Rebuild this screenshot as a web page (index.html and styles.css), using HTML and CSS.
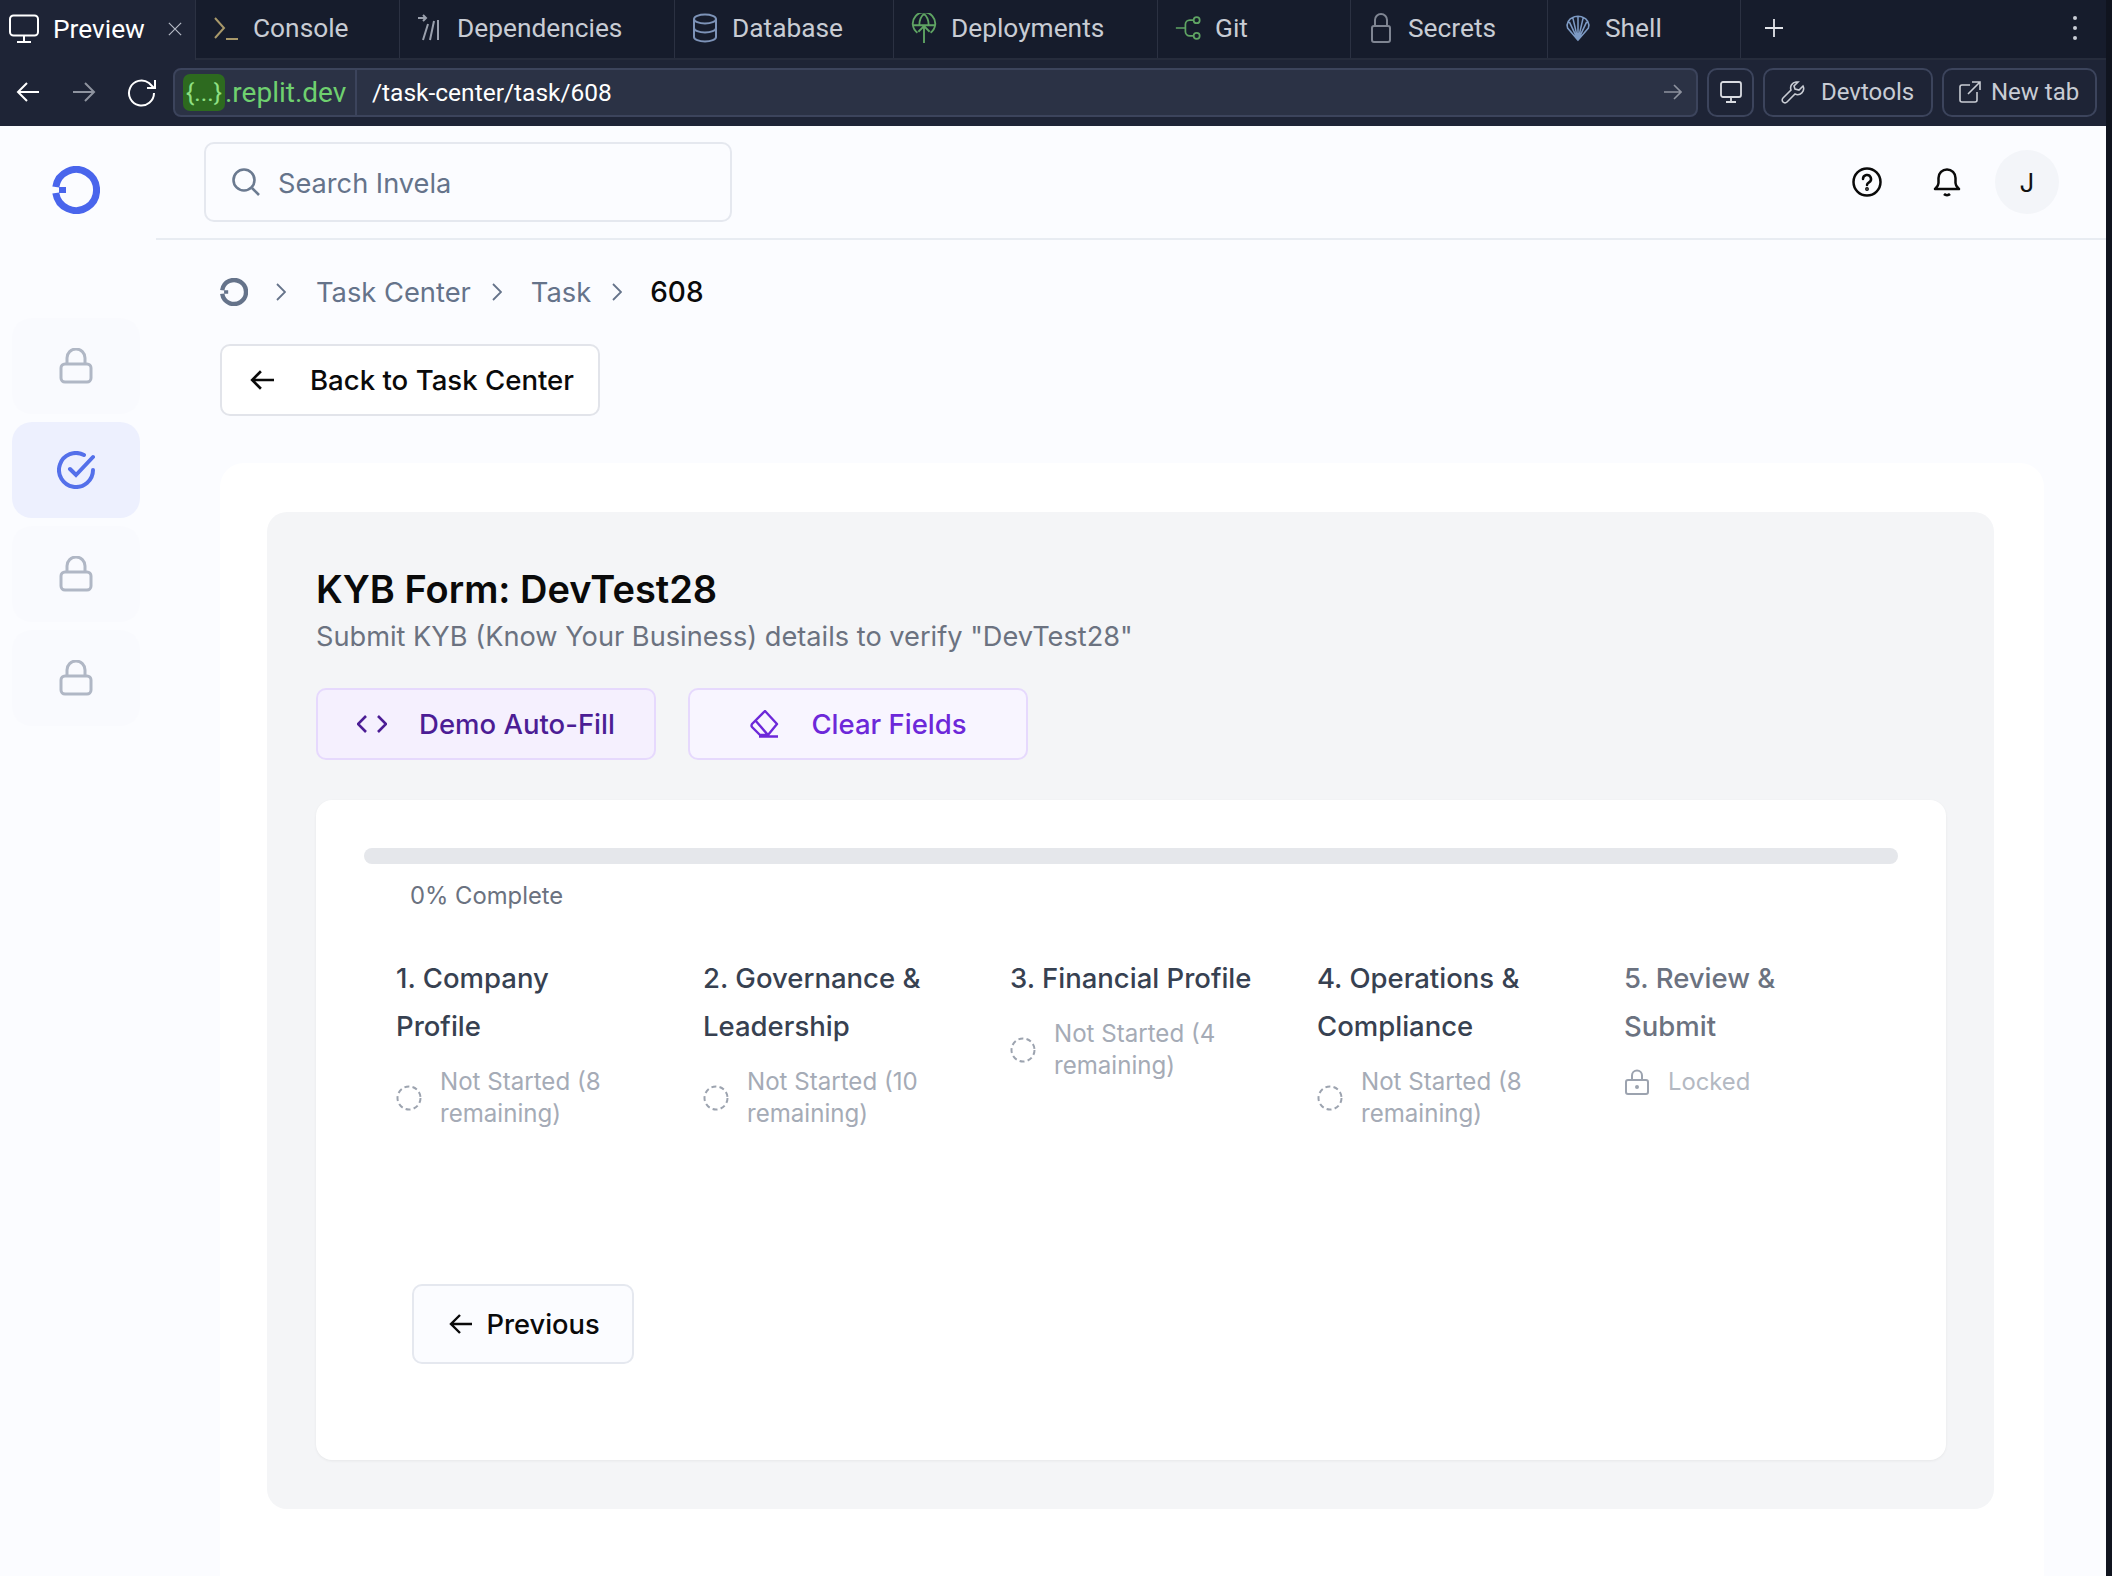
FILE: index.html
```html
<!DOCTYPE html>
<html lang="en">
<head>
  <meta charset="UTF-8">
  <title>Task 608</title>
  <link rel="stylesheet" href="styles.css">
</head>
<body>
  <div class="frame">
    <!-- replit tab strip -->
    <nav class="tabs">
      <div class="tab tab-active">
        <svg class="tab-icon" viewBox="0 0 30 30" fill="none" stroke="#fff" stroke-width="2"><rect x="1" y="1.500" width="28" height="20" rx="3.500"/><path d="M15 22v6M8 28h14"/></svg>
        <span>Preview</span>
        <svg class="tab-close" viewBox="0 0 16 16" stroke="#b4b9c5" stroke-width="1.400"><path d="M1 1l14 14M15 1L1 15"/></svg>
      </div>
      <div class="tab">
        <svg class="tab-icon" viewBox="0 0 26 26" fill="none" stroke-width="2"><path d="M2 3l9 10-9 10" stroke="#a8986a"/><path d="M13 24h12" stroke="#a8986a"/></svg>
        <span>Console</span>
      </div>
      <div class="tab">
        <svg class="tab-icon" viewBox="0 0 26 26" fill="none" stroke="#9aa0ad" stroke-width="2"><path d="M6 25l5-16M13 25l4-19M21 25V5M1 3h8M6 0l3 3-3 3"/></svg>
        <span>Dependencies</span>
      </div>
      <div class="tab">
        <svg class="tab-icon" viewBox="0 0 26 30" fill="none" stroke="#7d93b8" stroke-width="2"><ellipse cx="13" cy="6" rx="11" ry="4.500"/><path d="M2 6v18c0 2.500 5 4.500 11 4.500s11-2 11-4.500V6M2 15c0 2.500 5 4.500 11 4.500S24 17.500 24 15"/></svg>
        <span>Database</span>
      </div>
      <div class="tab">
        <svg class="tab-icon" viewBox="0 0 26 32" fill="none" stroke="#5fa463" stroke-width="2"><path d="M6 21a12 12 0 1 1 14 0M1 13h24M13 1c-4 3-5 7-5 12M13 1c4 3 5 7 5 12M13 32V14M7 20l6-6 6 6"/></svg>
        <span>Deployments</span>
      </div>
      <div class="tab">
        <svg class="tab-icon" viewBox="0 0 30 30" fill="none" stroke="#5fa463" stroke-width="2"><path d="M1 15h10M22 6h-5a5 5 0 0 0-5 5v8a5 5 0 0 0 5 5h5"/><circle cx="25" cy="6" r="3.500"/><circle cx="25" cy="24" r="3.500"/></svg>
        <span>Git</span>
      </div>
      <div class="tab">
        <svg class="tab-icon" viewBox="0 0 26 30" fill="none" stroke="#7f8592" stroke-width="2"><path d="M7 13V7a6 6 0 0 1 12 0v6"/><rect x="4" y="13" width="18" height="16" rx="2"/></svg>
        <span>Secrets</span>
      </div>
      <div class="tab">
        <svg class="tab-icon" viewBox="0 0 30 30" fill="none" stroke="#7d9ac4" stroke-width="1.800"><path d="M15 29L3 15C1 10 5 4 9 3c2-2 10-2 12 0 4 1 8 7 6 12zM15 29L9 3M15 29V2M15 29l6-26M15 29L5 8M15 29L25 8"/></svg>
        <span>Shell</span>
      </div>
      <div class="tab-tools">
        <svg class="plus" viewBox="0 0 18 18" stroke="#e3e5ea" stroke-width="1.800"><path d="M9 0v18M0 9h18"/></svg>
        <span class="kebab"><i></i><i></i><i></i></span>
      </div>
    </nav>

    <!-- preview toolbar -->
    <div class="toolbar">
      <svg class="nav-icon first" viewBox="0 0 24 24" fill="none" stroke="#fff" stroke-width="2"><path d="M23 12H2M11 3l-9 9 9 9"/></svg>
      <svg class="nav-icon" viewBox="0 0 24 24" fill="none" stroke="#8e939f" stroke-width="2"><path d="M1 12h21M13 3l9 9-9 9"/></svg>
      <svg class="nav-icon reload" viewBox="0 0 30 30" fill="none" stroke="#fff" stroke-width="2"><path d="M27 16a12.500 12.500 0 1 1-5-10l5 5M28 3v8h-8"/></svg>
      <div class="url-bar">
        <span class="url-domain"><b>{...}</b>.replit.dev</span>
        <span class="url-path">/task-center/task/608</span>
        <svg class="url-go" viewBox="0 0 18 18" fill="none" stroke="#8e939f" stroke-width="1.600"><path d="M0 9h17M10 2l7 7-7 7"/></svg>
      </div>
      <div class="tool-btn tool-monitor">
        <svg viewBox="0 0 24 24" fill="none" stroke="#d9dbe1" stroke-width="1.800"><rect x="2" y="2" width="20" height="15" rx="2"/><path d="M12 17v5M7 22h10"/></svg>
      </div>
      <div class="tool-btn tool-devtools">
        <svg viewBox="0 0 24 24" fill="none" stroke="#c9ccd4" stroke-width="1.600"><path d="M15 2a6 6 0 0 0-5 8L2 18a2.500 2.500 0 0 0 4 4l8-8a6 6 0 0 0 8-8l-4 4-4-1-1-3 4-4z"/></svg>
        <span>Devtools</span>
      </div>
      <div class="tool-btn tool-newtab">
        <svg viewBox="0 0 24 24" fill="none" stroke="#c9ccd4" stroke-width="1.600"><path d="M12 5H4a2 2 0 0 0-2 2v13a2 2 0 0 0 2 2h13a2 2 0 0 0 2-2v-8M10 14L22 2M14 2h8v8"/></svg>
        <span>New tab</span>
      </div>
    </div>

    <div class="app">
      <aside class="sidebar">
        <div class="logo">
          <svg viewBox="0 0 48 48" fill="none"><path d="M3.800 21A20.500 20.500 0 1 1 3.800 27" stroke="#4965ec" stroke-width="7"/><rect x="7" y="21" width="7" height="6" fill="#4965ec"/></svg>
        </div>
        <div class="side-nav">
          <div class="side-item">
            <svg viewBox="0 0 34 36" fill="none" stroke="#b0b7c5" stroke-width="3"><path d="M8 16V10a9 9 0 0 1 18 0v6"/><rect x="2" y="16" width="30" height="18" rx="4"/></svg>
          </div>
          <div class="side-item side-active">
            <svg viewBox="0 0 38 38" fill="none" stroke="#5470ea" stroke-width="4" stroke-linecap="round"><path d="M36 19a17 17 0 1 1-9-15"/><path d="M13 18l6 6L36 6"/></svg>
          </div>
          <div class="side-item">
            <svg viewBox="0 0 34 36" fill="none" stroke="#b0b7c5" stroke-width="3"><path d="M8 16V10a9 9 0 0 1 18 0v6"/><rect x="2" y="16" width="30" height="18" rx="4"/></svg>
          </div>
          <div class="side-item">
            <svg viewBox="0 0 34 36" fill="none" stroke="#b0b7c5" stroke-width="3"><path d="M8 16V10a9 9 0 0 1 18 0v6"/><rect x="2" y="16" width="30" height="18" rx="4"/></svg>
          </div>
        </div>
      </aside>

      <div class="main">
        <header class="topbar">
          <div class="search">
            <svg viewBox="0 0 30 30" fill="none" stroke="#6b7a90" stroke-width="2.600"><circle cx="13" cy="13" r="10.500"/><path d="M21 21l7 7"/></svg>
            <span>Search Invela</span>
          </div>
          <div class="top-actions">
            <svg class="top-icon" viewBox="0 0 30 30" fill="none" stroke="#0a0a0a" stroke-width="2.500"><circle cx="15" cy="15" r="13.500"/><path d="M11 12a4 4 0 1 1 6 3.400c-1.400.8-2 1.400-2 2.600" stroke-linecap="round"/><circle cx="15" cy="22" r="0.700"/></svg>
            <svg class="top-icon" viewBox="0 0 30 30" fill="none" stroke="#0a0a0a" stroke-width="2.500" stroke-linejoin="round"><path d="M3 22c2-2 3.500-3 3.500-6v-5a8.500 8.500 0 0 1 17 0v5c0 3 1.500 4 3.500 6zM12 27c1.500 1.500 4.500 1.500 6 0"/></svg>
            <div class="avatar">J</div>
          </div>
        </header>

        <div class="content">
          <div class="breadcrumb">
            <svg class="crumb-logo" viewBox="0 0 48 48" fill="none"><path d="M3.800 21A20.500 20.500 0 1 1 3.800 27" stroke="#65738a" stroke-width="7.500"/><rect x="7" y="21" width="7" height="6" fill="#65738a"/></svg>
            <svg class="chev first-chev" viewBox="0 0 10 18" fill="none" stroke="#65738a" stroke-width="1.800"><path d="M1 1l8 8-8 8"/></svg>
            <span class="crumb">Task Center</span>
            <svg class="chev" viewBox="0 0 10 18" fill="none" stroke="#65738a" stroke-width="1.800"><path d="M1 1l8 8-8 8"/></svg>
            <span class="crumb">Task</span>
            <svg class="chev" viewBox="0 0 10 18" fill="none" stroke="#65738a" stroke-width="1.800"><path d="M1 1l8 8-8 8"/></svg>
            <span class="crumb crumb-current">608</span>
          </div>

          <button class="back-button">
            <svg viewBox="0 0 22 20" fill="none" stroke="#0a0a0a" stroke-width="2.400"><path d="M22 10H2M10 2l-8 8 8 8"/></svg>
            <span>Back to Task Center</span>
          </button>

          <section class="card">
            <div class="panel">
              <h1 class="form-title">KYB Form: DevTest28</h1>
              <p class="form-sub">Submit KYB (Know Your Business) details to verify "DevTest28"</p>
              <div class="form-actions">
                <button class="action action-demo">
                  <svg viewBox="0 0 30 20" fill="none" stroke="#4c1d95" stroke-width="2.600"><path d="M9 2l-8 8 8 8M21 2l8 8-8 8"/></svg>
                  <span>Demo Auto-Fill</span>
                </button>
                <button class="action action-clear">
                  <svg viewBox="0 0 30 28" fill="none" stroke="#6d28d9" stroke-width="2.400" stroke-linejoin="round"><path d="M16 1l12 13-9 11h-8l-8-8q-1-1 0-3zM6 10l13 15M10 26.500h19"/></svg>
                  <span>Clear Fields</span>
                </button>
              </div>

              <div class="wizard">
                <div class="progress"></div>
                <div class="progress-label">0% Complete</div>
                <div class="steps">
                  <div class="step">
                    <div class="step-title">1. Company Profile</div>
                    <div class="step-status">
                      <svg viewBox="0 0 26 26" fill="none" stroke="#9ca3af" stroke-width="2" stroke-dasharray="5 3.200"><circle cx="13" cy="13" r="11.500"/></svg>
                      <span>Not Started (8 remaining)</span>
                    </div>
                  </div>
                  <div class="step">
                    <div class="step-title">2. Governance &amp; Leadership</div>
                    <div class="step-status">
                      <svg viewBox="0 0 26 26" fill="none" stroke="#9ca3af" stroke-width="2" stroke-dasharray="5 3.200"><circle cx="13" cy="13" r="11.500"/></svg>
                      <span>Not Started (10 remaining)</span>
                    </div>
                  </div>
                  <div class="step">
                    <div class="step-title">3. Financial Profile</div>
                    <div class="step-status">
                      <svg viewBox="0 0 26 26" fill="none" stroke="#9ca3af" stroke-width="2" stroke-dasharray="5 3.200"><circle cx="13" cy="13" r="11.500"/></svg>
                      <span>Not Started (4 remaining)</span>
                    </div>
                  </div>
                  <div class="step">
                    <div class="step-title">4. Operations &amp; Compliance</div>
                    <div class="step-status">
                      <svg viewBox="0 0 26 26" fill="none" stroke="#9ca3af" stroke-width="2" stroke-dasharray="5 3.200"><circle cx="13" cy="13" r="11.500"/></svg>
                      <span>Not Started (8 remaining)</span>
                    </div>
                  </div>
                  <div class="step step-locked">
                    <div class="step-title">5. Review &amp; Submit</div>
                    <div class="step-status">
                      <svg viewBox="0 0 26 26" fill="none" stroke="#9ca3af" stroke-width="2"><path d="M8 11V6.500a5 5 0 0 1 10 0V11"/><rect x="2" y="11" width="22" height="14" rx="2"/><circle cx="13" cy="18" r="1" fill="#9ca3af"/></svg>
                      <span>Locked</span>
                    </div>
                  </div>
                </div>
                <button class="prev-button">
                  <svg viewBox="0 0 24 22" fill="none" stroke="#0a0a0a" stroke-width="2.400"><path d="M23 11H2M11 2l-9 9 9 9"/></svg>
                  <span>Previous</span>
                </button>
              </div>
            </div>
          </section>
        </div>
      </div>
    </div>
  </div>
</body>
</html>
```

FILE: styles.css
```css
* {
  box-sizing: border-box;
}

html, body {
  margin: 0;
  height: 1576px;
  overflow: hidden;
  background: #10141f;
}

body {
  padding-right: 6px;
  font-family: "Inter", "Liberation Sans", sans-serif;
}

button {
  font-family: inherit;
  cursor: pointer;
}

.frame {
  height: 100%;
  display: flex;
  flex-direction: column;
}

/* Tab strip */
.tabs {
  height: 60px;
  flex: none;
  display: grid;
  grid-template-columns: 196px 204px 275px 219px 264px 193px 197px 193px 1fr;
  background: #161c2c;
  border-bottom: 2px solid #262c3c;
  font-family: "Roboto", "Liberation Sans", sans-serif;
  font-size: 26.300px;
  color: #c8ccd4;
}

.tab {
  display: flex;
  align-items: center;
  padding: 0 0 2px 17px;
  gap: 14px;
  border-right: 1px solid #2b3142;
}

.tab-icon {
  width: 26px;
  height: 30px;
  flex: none;
}

.tab-active {
  background: #1e2436;
  color: #fff;
  padding-left: 9px;
  margin-bottom: -2px;
}

.tab-active .tab-icon {
  width: 30px;
}

.tab-close {
  width: 14px;
  height: 14px;
  margin-left: 9px;
}

.tab-tools {
  display: flex;
  align-items: center;
  justify-content: space-between;
  padding: 0 29px 2px 24px;
}

.plus {
  width: 18px;
  height: 18px;
}

.kebab {
  display: flex;
  flex-direction: column;
  gap: 6px;
}

.kebab i {
  width: 4px;
  height: 4px;
  border-radius: 50%;
  background: #c8ccd4;
}

/* Toolbar */
.toolbar {
  height: 66px;
  flex: none;
  display: flex;
  align-items: center;
  background: #1e2436;
  font-family: "Roboto", "Liberation Sans", sans-serif;
  font-size: 24.500px;
  color: #fff;
  padding-bottom: 2px;
}

.nav-icon {
  width: 24px;
  height: 24px;
  margin-left: 32px;
  flex: none;
}

.nav-icon.first {
  margin-left: 16px;
}

.nav-icon.reload {
  width: 30px;
  height: 30px;
  margin-left: 31px;
}

.url-bar {
  flex: 1;
  height: 49px;
  margin-left: 16px;
  display: flex;
  align-items: center;
  background: #2b3245;
  border: 2px solid #3c445c;
  border-radius: 8px;
}

.url-domain {
  height: 100%;
  display: flex;
  align-items: center;
  padding: 0 8px;
  width: 182px;
  border-right: 2px solid #3c445c;
  font-size: 28px;
  color: #6fd06f;
}

.url-domain b {
  font-size: 24.500px;
  font-weight: 400;
  background: #2d6a1f;
  color: #8fe083;
  border-radius: 7px;
  padding: 4px 3px;
}

.url-path {
  margin-left: 15px;
}

.url-go {
  width: 18px;
  height: 18px;
  margin-left: auto;
  margin-right: 14px;
}

.tool-btn {
  height: 49px;
  margin-left: 9px;
  display: flex;
  align-items: center;
  gap: 14px;
  border: 2px solid #3c445c;
  border-radius: 10px;
  font-size: 24px;
  color: #c8ccd4;
  flex: none;
}

.tool-btn svg {
  width: 24px;
  height: 24px;
  flex: none;
}

.tool-monitor {
  width: 47px;
  justify-content: center;
}

.tool-devtools {
  width: 170px;
  padding-left: 16px;
  gap: 16px;
}

.tool-newtab {
  width: 155px;
  padding-left: 14px;
  gap: 9px;
  margin-right: 9px;
}

/* App shell */
.app {
  flex: 1;
  display: flex;
  min-height: 0;
  background: #fbfcff;
}

.sidebar {
  width: 156px;
  flex: none;
  padding: 0 12px;
}

.logo {
  height: 192px;
  padding-top: 40px;
  display: flex;
  margin-right: 4px;
  justify-content: center;
}

.logo svg {
  width: 48px;
  height: 48px;
}

.side-nav {
  display: flex;
  flex-direction: column;
  gap: 8px;
  width: 128px;
}

.side-item {
  height: 96px;
  border-radius: 20px;
  background: #f9fafe;
  display: flex;
  align-items: center;
  justify-content: center;
}

.side-item svg {
  width: 34px;
  height: 36px;
}

.side-active {
  background: #edf0fe;
}

.side-active svg {
  width: 38px;
  height: 38px;
}

.main {
  flex: 1;
  display: flex;
  flex-direction: column;
  min-width: 0;
}

.topbar {
  height: 114px;
  flex: none;
  display: flex;
  align-items: center;
  justify-content: space-between;
  padding: 0 47px 0 48px;
  border-bottom: 2px solid #e8ecf2;
}

.search {
  width: 528px;
  height: 80px;
  display: flex;
  align-items: center;
  gap: 17px;
  padding-left: 25px;
  border: 2px solid #e5e8ef;
  border-radius: 10px;
  font-size: 27.200px;
  color: #65738a;
}

.search span {
  padding-top: 2px;
}

.search svg {
  width: 30px;
  height: 30px;
}

.top-actions {
  display: flex;
  align-items: center;
}

.top-icon {
  width: 30px;
  height: 30px;
  margin-right: 50px;
}

.top-icon + .top-icon {
  margin-right: 33px;
}

.avatar {
  width: 64px;
  height: 64px;
  border-radius: 50%;
  background: #f3f5f9;
  display: flex;
  align-items: center;
  justify-content: center;
  font-size: 26px;
  color: #111;
}

.content {
  flex: 1;
  min-height: 0;
  padding: 0 62px 0 64px;
}

/* Breadcrumb */
.breadcrumb {
  display: flex;
  align-items: center;
  height: 30px;
  margin-top: 37px;
  font-size: 27.300px;
  color: #65738a;
}

.crumb-logo {
  width: 28px;
  height: 28px;
}

.chev {
  width: 10px;
  height: 18px;
  margin: 0 29px 0 21px;
}

.first-chev {
  margin: 0 30px 0 28px;
}

.crumb-current {
  margin-left: -1px;
  font-size: 28px;
  color: #0a0a0a;
  font-weight: 500;
}

.back-button {
  display: flex;
  align-items: center;
  gap: 36px;
  width: 380px;
  height: 72px;
  margin-top: 37px;
  padding: 0 0 0 28px;
  background: #fff;
  border: 2px solid #e2e4ea;
  border-radius: 10px;
  font-size: 27.600px;
  font-weight: 500;
  color: #0a0a0a;
}

.back-button svg {
  width: 24px;
  height: 22px;
}

/* Card and panel */
.card {
  margin-top: 47px;
  height: 1113px;
  padding: 49px 50px 0 47px;
  background: #fff;
  border-radius: 24px 24px 0 0;
}

.panel {
  height: 997px;
  padding: 48px 48px 48px 49px;
  background: #f4f5f7;
  border-radius: 20px;
}

.form-title {
  margin: 5px 0 0;
  font-size: 38px;
  line-height: 48px;
  font-weight: 600;
  color: #0a0a0a;
}

.form-sub {
  margin: 3px 0 0;
  font-size: 27.200px;
  line-height: 42px;
  color: #6b7280;
}

.form-actions {
  display: flex;
  gap: 32px;
  margin-top: 30px;
}

.action {
  width: 340px;
  height: 72px;
  display: flex;
  align-items: center;
  justify-content: center;
  gap: 32px;
  border: 2px solid #e6d9fd;
  border-radius: 10px;
  font-size: 27.500px;
  font-weight: 500;
  padding: 0;
}

.action-demo {
  background: #f5f0fe;
  color: #4c1d95;
}

.action-demo svg {
  width: 30px;
  height: 20px;
}

.action-clear {
  background: #f8f5ff;
  color: #6d28d9;
}

.action-clear svg {
  width: 30px;
  height: 28px;
}

/* Wizard */
.wizard {
  margin-top: 40px;
  height: 660px;
  padding: 48px;
  background: #fff;
  border-radius: 16px;
  box-shadow: 0 1px 3px rgba(0, 0, 0, 0.06);
}

.progress {
  height: 16px;
  border-radius: 8px;
  background: #e5e7eb;
}

.progress-label {
  margin: 16px 0 0 46px;
  font-size: 23.800px;
  line-height: 32px;
  color: #6b7280;
}

.steps {
  display: grid;
  grid-template-columns: repeat(5, 307px);
  margin: 42px 0 0 32px;
  height: 330px;
}

.step-title {
  width: 245px;
  font-size: 27.500px;
  font-weight: 500;
  line-height: 48px;
  color: #374151;
}

.step-locked .step-title {
  color: #6b7280;
}

.step-status {
  display: flex;
  align-items: center;
  gap: 18px;
  width: 250px;
  margin-top: 16px;
  font-size: 24.100px;
  line-height: 32px;
  color: #a5abb6;
}

.step-locked .step-status {
  color: #b4b9c2;
  font-size: 23.800px;
}

.step-status svg {
  width: 26px;
  height: 26px;
  flex: none;
}

.prev-button {
  display: flex;
  align-items: center;
  justify-content: center;
  gap: 13px;
  width: 222px;
  height: 80px;
  margin-left: 48px;
  padding: 0 0 0 3px;
  background: #fbfcff;
  border: 2px solid #e5e8ef;
  border-radius: 10px;
  font-size: 27.300px;
  font-weight: 500;
  color: #0a0a0a;
}

.prev-button svg {
  width: 24px;
  height: 22px;
}
```
